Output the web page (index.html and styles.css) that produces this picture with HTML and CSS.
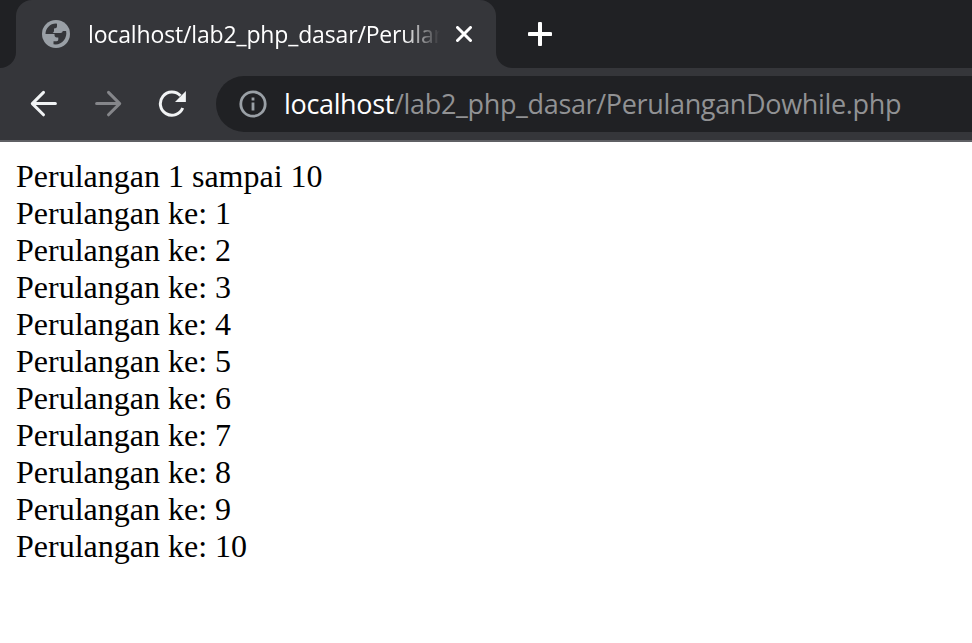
FILE: index.html
```html
<!DOCTYPE html>
<html lang="id">
<head>
<meta charset="utf-8">
<title>localhost/lab2_php_dasar/PerulanganDowhile.php</title>
<link rel="stylesheet" href="styles.css">
</head>
<body>
<header class="browser">
  <div class="tabs">
    <div class="before"></div>
    <div class="tab">
      <svg class="globe" viewBox="0 0 28 28"><circle cx="14" cy="14" r="14" fill="#9aa0a6"/><path fill="#35363a" d="M3.5 14C3.5 8.500 8 3.500 14 3.500l1 .3v2.400c0 1.600-1.200 2.100-3 2.300v2.200c0 1.500-1 2.300-2.500 2.300H12.500V14zM12.500 13h6c1.200 0 2.200-1 2.200-2h3.400c1.500 6.500-3.800 13.500-10.400 13.500l-2.200-.3v-3h3c1.300 0 1.800-.8 1.800-2v-1.700h-1.500c-1.500 0-2.300-1-2.300-2.500z"/></svg>
      <span class="title">localhost/lab2_php_dasar/Perulan</span>
      <svg class="close" viewBox="0 0 16 16"><path d="M1.5 1.5l13 13m0-13l-13 13"/></svg>
    </div>
    <div class="after"><svg class="plus" viewBox="0 0 24 24"><path d="M12 1.5v21M1.5 12h21"/></svg></div>
  </div>
  <div class="toolbar">
    <svg class="arrow" viewBox="0 0 28 28"><path d="M25.4 13.6H3M13.5 2.4L2.3 13.6 13.5 24.8"/></svg>
    <svg class="arrow forward" viewBox="0 0 28 28"><path d="M2.6 13.6H25M14.5 2.4L25.7 13.6 14.5 24.8"/></svg>
    <svg class="reload" viewBox="0 0 28 28"><path class="ring" d="M22.5 5.8A11.6 11.6 0 1 0 24.7 18"/><path class="head" d="M27.9 1v11H17z"/></svg>
    <div class="address">
      <svg class="info" viewBox="0 0 28 28"><circle cx="14" cy="14" r="12.2"/><path d="M14 12.5V20.5M14 7.5v3"/></svg>
      <span class="url"><span class="host">localhost</span>/lab2_php_dasar/PerulanganDowhile.php</span>
    </div>
  </div>
</header>
<main>
Perulangan 1 sampai 10<br>
Perulangan ke: 1<br>
Perulangan ke: 2<br>
Perulangan ke: 3<br>
Perulangan ke: 4<br>
Perulangan ke: 5<br>
Perulangan ke: 6<br>
Perulangan ke: 7<br>
Perulangan ke: 8<br>
Perulangan ke: 9<br>
Perulangan ke: 10
</main>
</body>
</html>
```
FILE: styles.css
```css
* { box-sizing: border-box; }
body { margin: 0; height: 643px; overflow: hidden; background: #fff; }
svg { flex: none; display: block; }
.browser { height: 142px; background: #35363a; border-bottom: 2px solid #5f6064; font-family: "Open Sans", sans-serif; }
.tabs { display: flex; height: 68px; background: linear-gradient(#202124 50%, #35363a 50%); }
.before { width: 16px; background: #202124; border-bottom-right-radius: 16px; }
.tab { display: flex; align-items: center; width: 480px; padding-left: 26px; background: #35363a; border-radius: 16px 16px 0 0; }
.globe { width: 28px; height: 28px; }
.title { width: 352px; margin-left: 18px; overflow: hidden; white-space: nowrap; color: #fff; font-size: 23px; line-height: 36px; letter-spacing: -.15px; -webkit-mask-image: linear-gradient(90deg, #000 315px, transparent 352px); mask-image: linear-gradient(90deg, #000 315px, transparent 352px); }
.close { width: 16px; height: 16px; margin-left: 16px; }
.close path, .plus path { stroke: #fff; stroke-width: 3; stroke-linecap: round; fill: none; }
.after { flex: 1; padding: 22px 0 0 32px; background: #202124; border-bottom-left-radius: 16px; }
.plus { width: 24px; height: 24px; }
.plus path { stroke-width: 4; }
.toolbar { display: flex; align-items: center; height: 72px; padding-left: 30px; }
.arrow { width: 28px; height: 28px; margin-right: 36px; }
.arrow path { fill: none; stroke: #f1f3f4; stroke-width: 3; stroke-linecap: round; stroke-linejoin: round; }
.arrow.forward path { stroke: #85868a; }
.reload { width: 28px; height: 28px; margin-right: 30px; }
.ring { fill: none; stroke: #f1f3f4; stroke-width: 3; }
.head { fill: #f1f3f4; }
.address { display: flex; align-items: center; flex: 1; height: 56px; padding-left: 22px; background: #202124; border-radius: 28px 0 0 28px; }
.info { width: 28px; height: 28px; margin-left: .5px; fill: none; stroke: #9aa0a6; stroke-width: 2.8; }
.url { margin-left: 17.5px; white-space: nowrap; color: #919294; font-size: 27px; line-height: 40px; letter-spacing: -.34px; }
.host { color: #fff; }
main { padding: 16px; color: #000; font: 32px/37px "Liberation Serif", serif; }
```
